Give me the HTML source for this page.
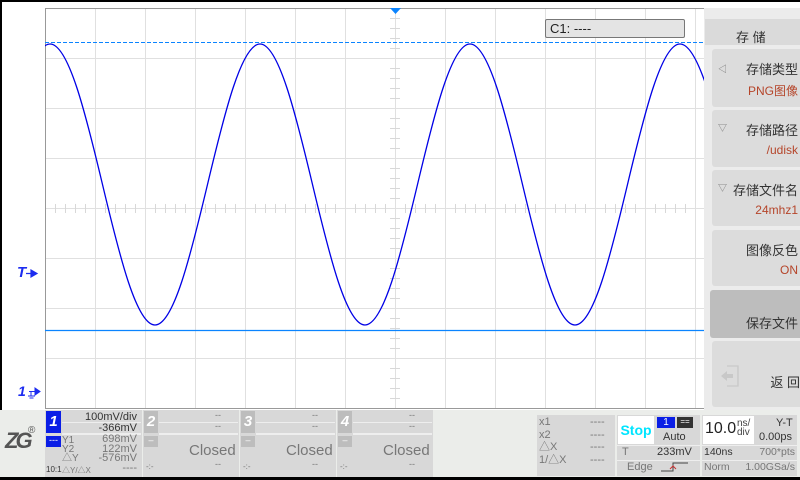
<!DOCTYPE html>
<html><head><meta charset="utf-8"><style>
*{margin:0;padding:0;box-sizing:border-box}
body{width:800px;height:480px;overflow:hidden;background:#fff;font-family:"Liberation Sans","Noto Sans CJK SC",sans-serif;position:relative}
.a{position:absolute}
.t{font-size:11px;color:#333;white-space:nowrap}
.g{color:#777}
.btn{position:absolute;left:712px;width:88px;background:#dcdcdc;border-radius:3px 0 0 3px}
.btn .l1{position:absolute;right:2px;top:10px;font-size:13px;color:#333}
.btn .l2{position:absolute;right:2px;top:33px;font-size:12px;color:#b5452a}
</style></head><body>
<svg class="a" style="left:0;top:0" width="800" height="480">
<rect x="0" y="0" width="800" height="2" fill="#000"/>
<rect x="0" y="0" width="2" height="480" fill="#000"/>
<rect x="0" y="477" width="800" height="3" fill="#000"/>
<g stroke="#e0e0e0" stroke-width="1">
<line x1="95.5" y1="8" x2="95.5" y2="408"/><line x1="145.5" y1="8" x2="145.5" y2="408"/><line x1="195.5" y1="8" x2="195.5" y2="408"/><line x1="245.5" y1="8" x2="245.5" y2="408"/><line x1="295.5" y1="8" x2="295.5" y2="408"/><line x1="345.5" y1="8" x2="345.5" y2="408"/><line x1="395.5" y1="8" x2="395.5" y2="408"/><line x1="445.5" y1="8" x2="445.5" y2="408"/><line x1="495.5" y1="8" x2="495.5" y2="408"/><line x1="545.5" y1="8" x2="545.5" y2="408"/><line x1="595.5" y1="8" x2="595.5" y2="408"/><line x1="645.5" y1="8" x2="645.5" y2="408"/><line x1="695.5" y1="8" x2="695.5" y2="408"/>
<line x1="45" y1="58.5" x2="704" y2="58.5"/><line x1="45" y1="108.5" x2="704" y2="108.5"/><line x1="45" y1="158.5" x2="704" y2="158.5"/><line x1="45" y1="208.5" x2="704" y2="208.5"/><line x1="45" y1="258.5" x2="704" y2="258.5"/><line x1="45" y1="308.5" x2="704" y2="308.5"/><line x1="45" y1="358.5" x2="704" y2="358.5"/>
</g>
<g stroke="#d8d8d8" stroke-width="1">
<path d="M390 18.5h10M390 28.5h10M390 38.5h10M390 48.5h10M390 68.5h10M390 78.5h10M390 88.5h10M390 98.5h10M390 118.5h10M390 128.5h10M390 138.5h10M390 148.5h10M390 168.5h10M390 178.5h10M390 188.5h10M390 198.5h10M390 218.5h10M390 228.5h10M390 238.5h10M390 248.5h10M390 268.5h10M390 278.5h10M390 288.5h10M390 298.5h10M390 318.5h10M390 328.5h10M390 338.5h10M390 348.5h10M390 368.5h10M390 378.5h10M390 388.5h10M390 398.5h10"/>
<path d="M55.5 204v9M65.5 204v9M75.5 204v9M85.5 204v9M105.5 204v9M115.5 204v9M125.5 204v9M135.5 204v9M155.5 204v9M165.5 204v9M175.5 204v9M185.5 204v9M205.5 204v9M215.5 204v9M225.5 204v9M235.5 204v9M255.5 204v9M265.5 204v9M275.5 204v9M285.5 204v9M305.5 204v9M315.5 204v9M325.5 204v9M335.5 204v9M355.5 204v9M365.5 204v9M375.5 204v9M385.5 204v9M405.5 204v9M415.5 204v9M425.5 204v9M435.5 204v9M455.5 204v9M465.5 204v9M475.5 204v9M485.5 204v9M505.5 204v9M515.5 204v9M525.5 204v9M535.5 204v9M555.5 204v9M565.5 204v9M575.5 204v9M585.5 204v9M605.5 204v9M615.5 204v9M625.5 204v9M635.5 204v9M655.5 204v9M665.5 204v9M675.5 204v9M685.5 204v9"/>
</g>
<path d="M45.5 8.5H704M45.5 8V408.5H704" stroke="#999" fill="none"/>
<rect x="704" y="8" width="6" height="402" fill="#ebebeb"/>
<line x1="45" y1="42.5" x2="704" y2="42.5" stroke="#0a84ff" stroke-dasharray="4,2"/>
<line x1="45" y1="330.5" x2="704" y2="330.5" stroke="#0a84ff" stroke-width="1.2"/>
<clipPath id="c"><rect x="45" y="9" width="659" height="399"/></clipPath>
<path clip-path="url(#c)" fill="none" stroke="#0000e6" stroke-width="1.3" d="M-2.5 184.5 c17.12 -71.98 34.14 -140.5 52.5 -140.5 c18.36 0 35.38 68.52 52.5 140.5 c17.12 71.98 34.14 140.5 52.5 140.5 c18.36 0 35.38 -68.52 52.5 -140.5 c17.12 -71.98 34.14 -140.5 52.5 -140.5 c18.36 0 35.38 68.52 52.5 140.5 c17.12 71.98 34.14 140.5 52.5 140.5 c18.36 0 35.38 -68.52 52.5 -140.5 c17.12 -71.98 34.14 -140.5 52.5 -140.5 c18.36 0 35.38 68.52 52.5 140.5 c17.12 71.98 34.14 140.5 52.5 140.5 c18.36 0 35.38 -68.52 52.5 -140.5 c17.12 -71.98 34.14 -140.5 52.5 -140.5 c18.36 0 35.38 68.52 52.5 140.5"/>
<path d="M390 8h11l-5.5 6z" fill="#0a84ff"/>
<path d="M31 270l6 3.5-6 3.5z M26 273.5h6" fill="#1c2cf0" stroke="#1c2cf0" stroke-width="1.2"/>
<path d="M35 388l5 3.5-5 3.5z M29 391.5h6 M31 392v4 M28 396h7 M29.5 398h4" fill="#1c2cf0" stroke="#1c2cf0" stroke-width="1"/>
</svg>
<div class="a" style="left:17px;top:264px;font-size:15px;font-weight:bold;font-style:italic;color:#1c2cf0">T</div>
<div class="a" style="left:18px;top:383px;font-size:14px;font-weight:bold;font-style:italic;color:#1c2cf0">1</div>
<div class="a" style="left:545px;top:19px;width:140px;height:19px;background:#e4e4e4;border:1px solid #777;border-radius:2px;font-size:13px;color:#222;padding:1px 0 0 4px">C1: ----</div>
<div class="a" style="left:710px;top:8px;width:90px;height:402px;background:#ececec"></div>
<div class="a" style="left:705px;top:19px;width:95px;height:26px;background:#dadada;font-size:13px;color:#333;padding:8px 0 0 31px">存 储</div>
<div class="btn" style="top:49px;height:58px"><span class="a" style="left:6px;top:13px;font-size:9px;color:#777">◁</span><div class="l1">存储类型</div><div class="l2">PNG图像</div></div>
<div class="btn" style="top:110px;height:57px"><span class="a" style="left:6px;top:11px;font-size:9px;color:#777">▽</span><div class="l1">存储路径</div><div class="l2">/udisk</div></div>
<div class="btn" style="top:170px;height:56px"><span class="a" style="left:6px;top:11px;font-size:9px;color:#777">▽</span><div class="l1">存储文件名</div><div class="l2">24mhz1</div></div>
<div class="btn" style="top:230px;height:56px"><div class="l1">图像反色</div><div class="l2">ON</div></div>
<div class="btn" style="left:710px;width:90px;top:290px;height:48px;background:#bdbdbd"><div class="l1" style="top:23px">保存文件</div></div>
<div class="btn" style="top:341px;height:66px"><svg class="a" style="left:8px;top:24px" width="20" height="22"><path d="M7 1h11v20H7" fill="none" stroke="#c8c8c8" stroke-width="1.3"/><path d="M1 11l6-5v3h6v4H7v3z" fill="#c8c8c8"/></svg><div class="l1" style="top:31px;right:0">返 回</div></div>
<div class="a" style="left:0;top:410px;width:800px;height:67px;background:#ebedea"></div>
<div class="a" style="left:5px;top:428px;font-size:22px;font-weight:bold;font-style:italic;color:#555;letter-spacing:-3px">ZG</div>
<div class="a" style="left:28px;top:425px;font-size:10px;color:#555">®</div>
<div class="a" style="left:45px;top:410px;width:97px;height:67px;background:#d8d8d8"></div>
<div class="a" style="left:46px;top:411px;width:15px;height:22px;background:#0a1ee6;color:#fff;font-size:15px;font-weight:bold;font-style:italic;text-align:center;line-height:22px">1</div>
<div class="a" style="left:46px;top:436px;width:15px;height:11px;background:#0a1ee6;color:#fff;font-size:9px;text-align:center;line-height:9px">---</div>
<div class="a" style="left:62px;top:422px;width:79px;height:1px;background:#eee"></div>
<div class="a" style="left:62px;top:433px;width:79px;height:2px;background:#eee"></div>
<div class="a t" style="right:663px;top:411px">100mV/div</div>
<div class="a t" style="right:663px;top:422px">-366mV</div>
<div class="a t g" style="left:62px;top:436px;line-height:9px;font-size:10px">Y1<br>Y2<br>△Y</div>
<div class="a t g" style="left:62px;top:465px;font-size:8px">△Y/△X</div>
<div class="a t" style="left:46px;top:465px;font-size:8px">10:1</div>
<div class="a t g" style="right:663px;top:435px;line-height:9.5px;font-size:11px;text-align:right">698mV<br>122mV<br>-576mV<br>----</div>
<div class="a" style="left:143px;top:410px;width:96px;height:67px;background:#d8d8d8"></div>
<div class="a" style="left:240px;top:410px;width:96px;height:67px;background:#d8d8d8"></div>
<div class="a" style="left:337px;top:410px;width:96px;height:67px;background:#d8d8d8"></div>
<div class="a" style="left:144px;top:411px;width:14px;height:22px;background:#bdbdbd;color:#fff;font-size:15px;font-weight:bold;font-style:italic;text-align:center;line-height:22px">2</div>
<div class="a" style="left:241px;top:411px;width:14px;height:22px;background:#bdbdbd;color:#fff;font-size:15px;font-weight:bold;font-style:italic;text-align:center;line-height:22px">3</div>
<div class="a" style="left:338px;top:411px;width:14px;height:22px;background:#bdbdbd;color:#fff;font-size:15px;font-weight:bold;font-style:italic;text-align:center;line-height:22px">4</div>
<div class="a" style="left:144px;top:436px;width:14px;height:11px;background:#bdbdbd;color:#fff;font-size:9px;text-align:center;line-height:9px">–</div>
<div class="a" style="left:241px;top:436px;width:14px;height:11px;background:#bdbdbd;color:#fff;font-size:9px;text-align:center;line-height:9px">–</div>
<div class="a" style="left:338px;top:436px;width:14px;height:11px;background:#bdbdbd;color:#fff;font-size:9px;text-align:center;line-height:9px">–</div>
<div class="a" style="left:159px;top:422px;width:79px;height:1px;background:#eee"></div><div class="a" style="left:159px;top:433px;width:79px;height:2px;background:#eee"></div>
<div class="a" style="left:256px;top:422px;width:79px;height:1px;background:#eee"></div><div class="a" style="left:256px;top:433px;width:79px;height:2px;background:#eee"></div>
<div class="a" style="left:353px;top:422px;width:79px;height:1px;background:#eee"></div><div class="a" style="left:353px;top:433px;width:79px;height:2px;background:#eee"></div>
<div class="a t g" style="left:215px;top:410px;font-size:9px;line-height:11px">--<br>--</div>
<div class="a t g" style="left:312px;top:410px;font-size:9px;line-height:11px">--<br>--</div>
<div class="a t g" style="left:409px;top:410px;font-size:9px;line-height:11px">--<br>--</div>
<div class="a g" style="left:189px;top:442px;font-size:15px">Closed</div>
<div class="a g" style="left:286px;top:442px;font-size:15px">Closed</div>
<div class="a g" style="left:383px;top:442px;font-size:15px">Closed</div>
<div class="a t g" style="left:146px;top:462px;font-size:8px">-:-</div><div class="a t g" style="left:215px;top:459px;font-size:9px">--</div>
<div class="a t g" style="left:243px;top:462px;font-size:8px">-:-</div><div class="a t g" style="left:312px;top:459px;font-size:9px">--</div>
<div class="a t g" style="left:340px;top:462px;font-size:8px">-:-</div><div class="a t g" style="left:409px;top:459px;font-size:9px">--</div>
<div class="a" style="left:537px;top:415px;width:78px;height:61px;background:#d8d8d8"></div>
<div class="a t g" style="left:539px;top:416px;font-size:11px;line-height:12.5px">x1<br>x2<br>△X<br>1/△X</div>
<div class="a t g" style="left:590px;top:416px;font-size:11px;line-height:12.5px">----<br>----<br>----<br>----</div>
<div class="a" style="left:617px;top:415px;width:83px;height:61px;background:#d8d8d8"></div>
<div class="a" style="left:618px;top:416px;width:36px;height:28px;background:#fff;color:#00e5ff;font-weight:bold;font-size:14px;text-align:center;line-height:28px">Stop</div>
<div class="a" style="left:657px;top:417px;width:18px;height:11px;background:#0a1ee6;color:#fff;font-size:10px;text-align:center;line-height:11px">1</div>
<div class="a" style="left:677px;top:417px;width:16px;height:11px;background:#333;color:#fff;font-size:8px;text-align:center;line-height:9px">==</div>
<div class="a t" style="left:663px;top:431px">Auto</div>
<div class="a" style="left:617px;top:445px;width:83px;height:1px;background:#eee"></div>
<div class="a" style="left:617px;top:460px;width:83px;height:1px;background:#eee"></div>
<div class="a t g" style="left:622px;top:446px">T</div><div class="a t" style="left:657px;top:446px">233mV</div>
<div class="a t g" style="left:627px;top:461px">Edge</div>
<svg class="a" style="left:660px;top:461px" width="30" height="12"><path d="M1 10h12V2h15" fill="none" stroke="#444"/><path d="M10 8l3-3 3 3" fill="none" stroke="#c33"/></svg>
<div class="a" style="left:702px;top:415px;width:95px;height:61px;background:#d8d8d8"></div>
<div class="a" style="left:703px;top:416px;width:51px;height:28px;background:#fff"></div>
<div class="a" style="left:705px;top:420px;font-size:16px;color:#222">10.0</div>
<div class="a" style="left:737px;top:419px;font-size:10px;color:#444;line-height:9px">ns/<br>div</div>
<div class="a t" style="left:776px;top:417px">Y-T</div>
<div class="a t" style="left:759px;top:431px">0.00ps</div>
<div class="a" style="left:702px;top:445px;width:95px;height:1px;background:#eee"></div>
<div class="a" style="left:702px;top:460px;width:95px;height:1px;background:#eee"></div>
<div class="a t" style="left:704px;top:446px;font-size:10.5px">140ns</div><div class="a t g" style="right:5px;top:446px;font-size:10.5px">700*pts</div>
<div class="a t g" style="left:704px;top:461px;font-size:10.5px">Norm</div><div class="a t g" style="right:5px;top:461px;font-size:10.5px">1.00GSa/s</div>
</body></html>
